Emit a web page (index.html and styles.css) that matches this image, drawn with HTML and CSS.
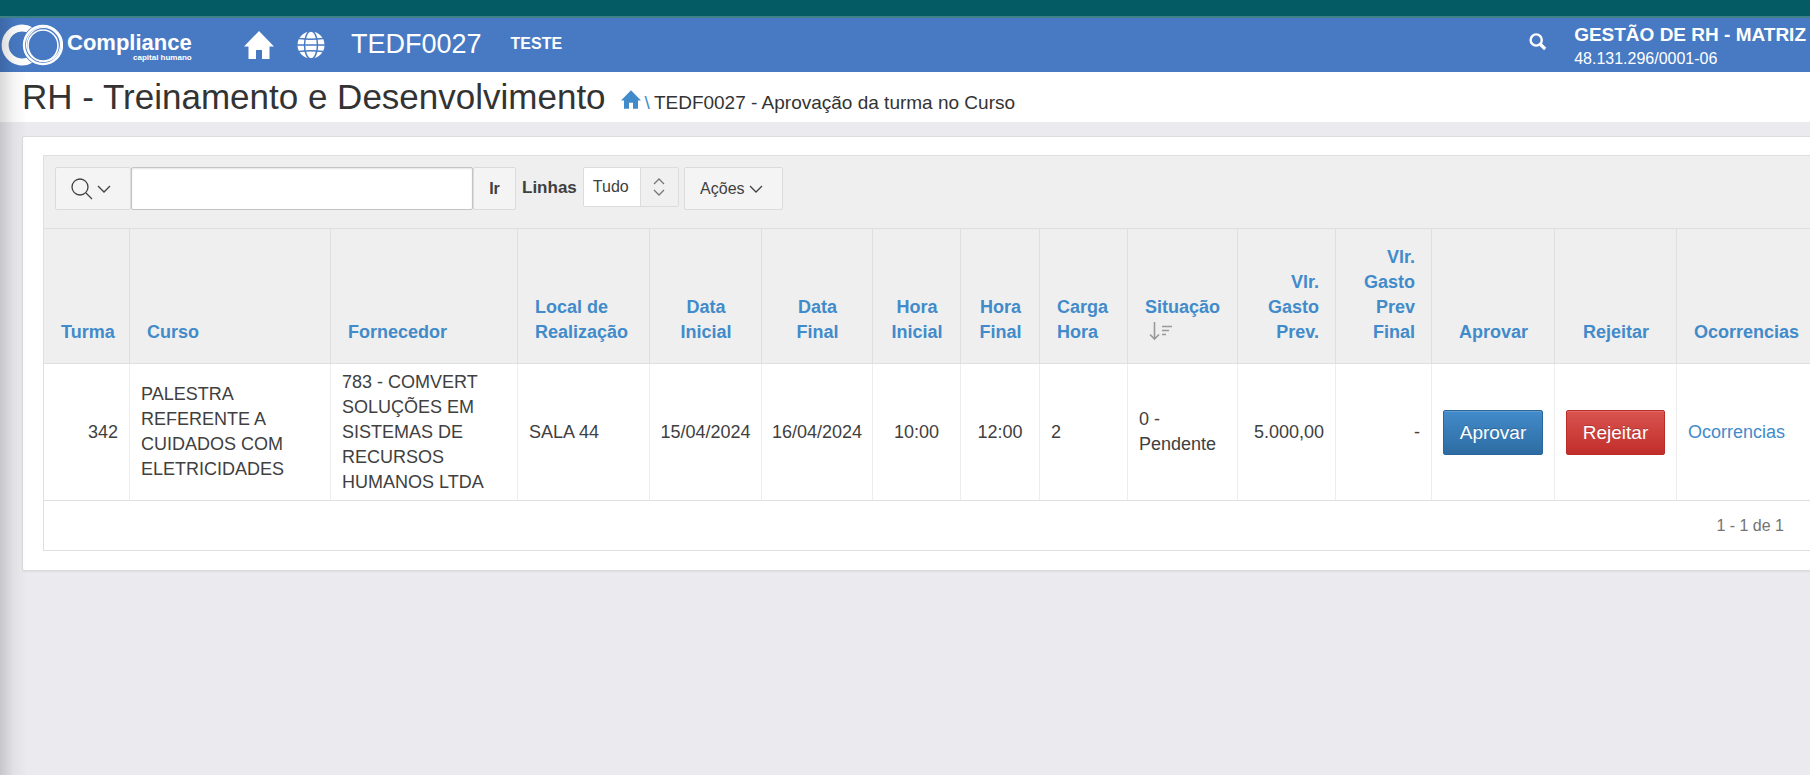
FILE: index.html
```html
<!DOCTYPE html>
<html lang="pt-BR">
<head>
<meta charset="utf-8">
<meta name="viewport" content="width=device-width, initial-scale=1">
<title>TEDF0027 - Aprovação da turma no Curso</title>
<link rel="stylesheet" href="styles.css">
</head>
<body>
<svg class="sprite" aria-hidden="true">
  <symbol id="home" viewBox="0 0 30 28"><path d="M15 0 0 15.5h4.500V28h7.500v-9h6v9h7.500V15.500H30z"/></symbol>
  <symbol id="chevron" viewBox="0 0 14 8"><path d="M1 1l6 6 6-6" fill="none" stroke="currentColor" stroke-width="1.300"/></symbol>
</svg>
<div class="strip"></div>
<div class="app">
  <header class="topbar">
    <a class="logo" href="#" aria-label="Compliance capital humano">
      <svg class="logo-mark" viewBox="0 0 62 42" aria-hidden="true">
        <path d="M30 6.500A17 17 0 1 0 30 35.500" fill="none" stroke="#fff" stroke-width="7"/>
        <circle cx="42" cy="21" r="19" fill="none" stroke="#487ac4" stroke-width="4"/>
        <g fill="none" stroke="#fff">
          <circle cx="42" cy="21" r="19" stroke-width="2.400"/>
          <circle cx="42.500" cy="20.500" r="17" stroke-width="1.200"/>
          <ellipse cx="42" cy="21.500" rx="15" ry="15.500" stroke-width="1.600"/>
        </g>
      </svg>
      <span class="logo-text"><span class="logo-name">Compliance</span><span class="logo-tag">capital humano</span></span>
    </a>
    <a class="top-home" href="#" aria-label="Início"><svg width="30" height="28" fill="#fff"><use href="#home"/></svg></a>
    <a class="top-globe" href="#" aria-label="Idioma">
      <svg width="28" height="28" viewBox="0 0 28 28"><circle cx="14" cy="14" r="13.500" fill="#fff"/><g fill="none" stroke="#487ac4" stroke-width="1.500"><path d="M0 14h28M2 7.500q12 1.500 24 0M2 20.500q12-1.500 24 0"/><ellipse cx="14" cy="14" rx="6.500" ry="14"/></g></svg>
    </a>
    <span class="code">TEDF0027</span>
    <strong class="env">TESTE</strong>
    <button class="top-search" type="button" aria-label="Pesquisar"><svg width="18" height="18" viewBox="0 0 18 18" fill="none" stroke="#fff"><circle cx="7.200" cy="7" r="5.600" stroke-width="2.400"/><path d="M11.500 11.500l4.700 4.500" stroke-width="3.200"/></svg></button>
    <div class="company"><strong>GESTÃO DE RH - MATRIZ</strong><span>48.131.296/0001-06</span></div>
  </header>
  <div class="titlebar">
    <h1>RH - Treinamento e Desenvolvimento</h1>
    <nav class="crumbs" aria-label="Navegação"><a href="#" aria-label="Início"><svg width="20" height="19" fill="#428bca"><use href="#home"/></svg><span>\</span></a><span>TEDF0027 - Aprovação da turma no Curso</span></nav>
  </div>
  <main>
    <section class="panel">
      <div class="report">
        <form class="toolbar">
          <button class="btn btn-search" type="button" aria-label="Selecionar colunas para pesquisa"><svg width="22" height="22" viewBox="0 0 22 22" fill="none" stroke="currentColor" stroke-width="1.300"><circle cx="9" cy="9" r="8"/><path d="M15 15l6 6"/></svg><svg width="14" height="8"><use href="#chevron"/></svg></button>
          <input class="query" type="text" aria-label="Pesquisar">
          <button class="btn btn-go" type="button">Ir</button>
          <label for="rows">Linhas</label>
          <span class="select"><select id="rows"><option>Tudo</option></select><svg width="12" height="18" viewBox="0 0 12 18" fill="none" stroke="#777" stroke-width="1.300" aria-hidden="true"><path d="M1 6l5-5 5 5M1 12l5 5 5-5"/></svg></span>
          <button class="btn btn-actions" type="button">Ações<svg width="14" height="8"><use href="#chevron"/></svg></button>
        </form>
        <table>
          <colgroup><col class="w86"><col class="w201"><col class="w187"><col class="w132"><col class="w112"><col class="w111"><col class="w88"><col class="w79"><col class="w88"><col class="w110"><col class="w98"><col class="w96"><col class="w123"><col class="w122"><col></colgroup>
          <thead>
            <tr>
              <th class="right" scope="col"><a href="#">Turma</a></th>
              <th scope="col"><a href="#">Curso</a></th>
              <th scope="col"><a href="#">Fornecedor</a></th>
              <th scope="col"><a href="#">Local de Realização</a></th>
              <th class="center" scope="col"><a href="#">Data Inicial</a></th>
              <th class="center" scope="col"><a href="#">Data Final</a></th>
              <th class="center" scope="col"><a href="#">Hora Inicial</a></th>
              <th class="center" scope="col"><a href="#">Hora Final</a></th>
              <th scope="col"><a href="#">Carga Hora</a></th>
              <th scope="col"><a href="#">Situação</a><span class="sort"><svg width="24" height="20" viewBox="0 0 24 20" fill="none" stroke="#999" stroke-width="1.600" aria-hidden="true"><path d="M5.500 1v17M1 13.500l4.500 4.500 4.500-4.500M13 5.500h10M13 9.500h7M13 13.500h4"/></svg></span></th>
              <th class="right" scope="col"><a href="#">Vlr. Gasto Prev.</a></th>
              <th class="right" scope="col"><a href="#">Vlr. Gasto Prev Final</a></th>
              <th class="center" scope="col"><a href="#">Aprovar</a></th>
              <th class="center" scope="col"><a href="#">Rejeitar</a></th>
              <th scope="col"><a href="#">Ocorrencias</a></th>
            </tr>
          </thead>
          <tbody>
            <tr>
              <td class="right">342</td>
              <td>PALESTRA REFERENTE A CUIDADOS COM ELETRICIDADES</td>
              <td>783 - COMVERT SOLUÇÕES EM SISTEMAS DE RECURSOS HUMANOS LTDA</td>
              <td>SALA 44</td>
              <td class="center date">15/04/2024</td>
              <td class="center date">16/04/2024</td>
              <td class="center">10:00</td>
              <td class="center">12:00</td>
              <td>2</td>
              <td>0 - Pendente</td>
              <td class="right">5.000,00</td>
              <td class="right">-</td>
              <td><button class="action approve" type="button">Aprovar</button></td>
              <td><button class="action reject" type="button">Rejeitar</button></td>
              <td><a href="#">Ocorrencias</a></td>
            </tr>
          </tbody>
        </table>
        <div class="pager">1 - 1 de 1</div>
      </div>
    </section>
  </main>
</div>
</body>
</html>
```
FILE: styles.css
```css
* { box-sizing: border-box; }
body { margin: 0; min-height: 100vh; display: flex; flex-direction: column; font-family: "Liberation Sans", Arial, sans-serif; color: #404040; background: #eaeaef; overflow-x: hidden; }
a { color: #428bca; text-decoration: none; }
button, input, select { font: inherit; color: inherit; margin: 0; }
svg { display: block; flex: none; }
.sprite { position: absolute; width: 0; height: 0; }

.strip { height: 18px; background: #045b63; border-bottom: 2px solid #3d8086; }
.app { flex: 1; position: relative; }
.app::before { content: ""; position: absolute; z-index: 1; inset: 0 auto 0 0; width: 28px; background: linear-gradient(to right, rgba(0,0,0,.15), rgba(0,0,0,.04) 50%, transparent); pointer-events: none; }

.topbar { height: 54px; display: flex; align-items: center; background: #487ac4; color: #fff; }
.logo { display: flex; align-items: center; gap: 4px; margin-left: 1px; width: 243px; color: #fff; }
.logo-mark { width: 62px; height: 42px; }
.logo-text { display: flex; flex-direction: column; align-items: flex-end; font-weight: bold; padding-top: 6px; }
.logo-name { font-size: 22px; line-height: 20px; }
.logo-tag { font-size: 8px; line-height: 10px; }
.top-home { margin-right: 23px; }
.top-globe { margin-right: 26px; }
.code { font-size: 27px; line-height: 30px; margin-right: 29px; padding-bottom: 3px; }
.env { font-size: 16px; padding-bottom: 3px; }
.top-search { margin-left: auto; margin-right: 27px; padding: 0 0 6px; border: 0; background: none; }
.company { display: flex; flex-direction: column; font-size: 16px; line-height: 24px; padding: 3px 4px 0 0; }
.company strong { font-size: 19px; }

.titlebar { height: 50px; display: flex; align-items: baseline; gap: 15px; padding-left: 22px; background: #fff; color: #333; }
h1 { margin: 0; font-size: 35px; line-height: 50px; font-weight: normal; }
.crumbs { display: flex; align-items: baseline; gap: 4px; font-size: 19px; }
.crumbs a { display: flex; align-items: baseline; gap: 4px; }

main { padding: 14px 0 0 22px; }
.panel { border: 1px solid #dcdcdc; border-right: 0; border-radius: 2px 0 0 2px; background: #fff; box-shadow: 0 1px 2px rgba(0,0,0,.06); padding: 18px 0 19px 20px; }
.report { border: 1px solid #dfdfdf; border-right: 0; }

.toolbar { display: flex; align-items: flex-start; height: 72px; padding: 11px; background: #efefef; font-size: 16px; }
.toolbar label { font-size: 17px; font-weight: bold; line-height: 42px; margin: 0 6px; }
.btn { height: 43px; display: flex; align-items: center; justify-content: center; border: 1px solid #dbdbdb; border-radius: 2px; background: #f4f4f4; padding: 0 15px; gap: 4px; }
.btn-search { width: 76px; padding: 0 19px 0 15px; }
.btn-go { width: 43px; font-weight: bold; padding: 0; }
.btn-actions { width: 99px; padding: 0 19px 0 15px; }
.query { width: 342px; height: 43px; border: 1px solid #c4c4c4; border-radius: 2px; background: #fff; box-shadow: inset 0 1px 2px rgba(0,0,0,.1); padding: 0 10px; }
.select { position: relative; margin-right: 5px; }
.select select { display: block; width: 96px; height: 40px; appearance: none; border: 1px solid #dcdcdc; border-radius: 2px; background: linear-gradient(to right, #fff 56px, #dcdcdc 56px, #dcdcdc 57px, #f0f0f0 57px); padding: 0 9px 2px; }
.select svg { position: absolute; right: 14px; top: 11px; pointer-events: none; }

table { width: 100%; table-layout: fixed; border-collapse: separate; border-spacing: 0; border-top: 1px solid #dfdfdf; font-size: 18px; line-height: 25px; }
th { padding: 16px 16px 18px 17px; text-align: left; vertical-align: bottom; background: #efefef; border-bottom: 1px solid #dfdfdf; border-right: 1px solid #dfdfdf; }
td { height: 137px; padding: 5px 11px; vertical-align: middle; border-bottom: 1px solid #dfdfdf; border-right: 1px solid #ededed; }
th:last-child, td:last-child { border-right: 0; }
.right { text-align: right; }
.center { text-align: center; }
th.center { padding-left: 13px; padding-right: 12px; }
td.date { padding-left: 5px; padding-right: 5px; white-space: nowrap; }
.sort { display: flex; align-items: center; height: 25px; padding: 0 0 4px 4px; }
.action { display: block; width: 100%; height: 45px; padding: 0; border-radius: 2px; border: 1px solid; color: #fff; font-size: 19px; text-shadow: 0 -1px 0 rgba(0,0,0,.2); box-shadow: inset 0 1px 0 rgba(255,255,255,.15); }
.approve { border-color: #2b669a; background: linear-gradient(#428bca, #2d6ca2); }
.reject { border-color: #b92c28; background: linear-gradient(#d9534f, #c12e2a); }
.pager { padding: 12px 26px 12px 0; text-align: right; font-size: 16px; line-height: 25px; color: #737373; }

.w79 { width: 79px; }
.w86 { width: 86px; }
.w88 { width: 88px; }
.w96 { width: 96px; }
.w98 { width: 98px; }
.w110 { width: 110px; }
.w111 { width: 111px; }
.w112 { width: 112px; }
.w122 { width: 122px; }
.w123 { width: 123px; }
.w132 { width: 132px; }
.w187 { width: 187px; }
.w201 { width: 201px; }
```
